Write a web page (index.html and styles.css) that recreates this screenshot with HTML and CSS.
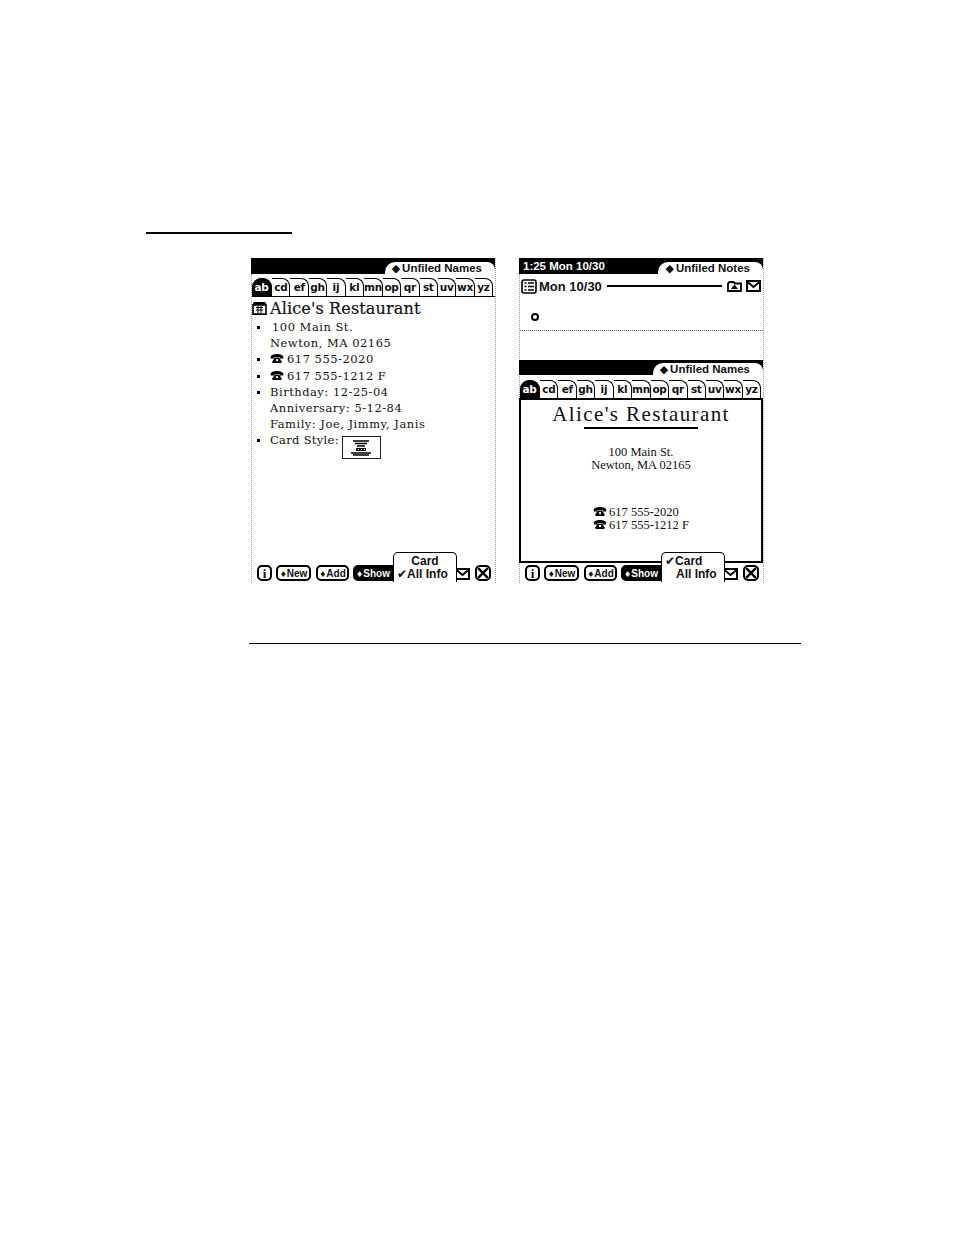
FILE: index.html
```html
<!DOCTYPE html>
<html lang="en">
<head>
    <meta charset="UTF-8">
    <meta name="viewport" content="width=device-width, initial-scale=1.0">
    <title>Names - card and all info views</title>
    <link rel="stylesheet" href="styles.css">
</head>
<body>
    <svg class="defs" width="0" height="0">
        <symbol id="phone" viewBox="0 0 14 10">
            <path d="M0 3.600C0 1 3.500 0 7 0s7 1 7 3.600V5H10V3.400H4V5H0z" fill="#000"/>
            <path d="M4.600 4h4.800l2.600 4v2H2V8z" fill="#000"/>
            <circle cx="7" cy="6.800" r="1.300" fill="#fff"/>
        </symbol>
        <symbol id="envelope" viewBox="0 0 15 12">
            <rect x="1" y="1" width="13" height="10" fill="#fff" stroke="#000" stroke-width="2"/>
            <path d="M1.500 2l6 5 6-5" fill="none" stroke="#000" stroke-width="2"/>
        </symbol>
    </svg>

    <div class="rule rule-short"></div>

    <div class="screens">
        <!-- All Info view -->
        <div class="screen">
            <div class="status">
                <span class="status-time"></span>
                <div class="folder-tab"><span class="diamond">◆</span>Unfiled Names</div>
            </div>
            <div class="tabs">
                <div class="tab active">ab</div>
                <div class="tab">cd</div>
                <div class="tab">ef</div>
                <div class="tab">gh</div>
                <div class="tab">ij</div>
                <div class="tab">kl</div>
                <div class="tab">mn</div>
                <div class="tab">op</div>
                <div class="tab">qr</div>
                <div class="tab">st</div>
                <div class="tab">uv</div>
                <div class="tab">wx</div>
                <div class="tab">yz</div>
            </div>
            <div class="info">
                <div class="info-title">
                    <svg class="building" viewBox="0 0 15 13">
                        <path d="M2 0h11l2 3H0z" fill="#000"/>
                        <path d="M1 3h13v9H1z" fill="#fff" stroke="#000" stroke-width="1.600"/>
                        <path d="M4 5.500h7M4 8h7M6 4v7M9 4v7M0 12.500h15" fill="none" stroke="#000"/>
                    </svg>
                    <span>Alice's Restaurant</span>
                </div>
                <div class="info-row"><i class="bullet"></i><span class="address-first">100 Main St.</span></div>
                <div class="info-row"><i></i><span>Newton, MA 02165</span></div>
                <div class="info-row"><i class="bullet"></i><span><svg class="phone"><use href="#phone"/></svg>617 555-2020</span></div>
                <div class="info-row"><i class="bullet"></i><span><svg class="phone"><use href="#phone"/></svg>617 555-1212 F</span></div>
                <div class="info-row"><i class="bullet"></i><span>Birthday: 12-25-04</span></div>
                <div class="info-row"><i></i><span>Anniversary: 5-12-84</span></div>
                <div class="info-row"><i></i><span>Family: Joe, Jimmy, Janis</span></div>
                <div class="info-row"><i class="bullet"></i><span class="card-style-label">Card Style:</span>
                    <div class="card-style">
                        <svg viewBox="0 0 20 16" width="20" height="16">
                            <path d="M2 1h16M4 3.500h12M6 6h8" stroke="#000" stroke-width="1.300"/>
                            <path d="M5 8h10v3H5z" fill="#000"/>
                            <path d="M7 9.500h1M10 9.500h1M13 9.500h1" stroke="#fff"/>
                            <path d="M0 13h20M2 15h16" stroke="#000" stroke-width="1.500"/>
                        </svg>
                    </div>
                </div>
            </div>
            <div class="toolbar">
                <div class="btn btn-info">i</div>
                <div class="btn btn-new"><span class="dot">♦</span>New</div>
                <div class="btn btn-add"><span class="dot">♦</span>Add</div>
                <div class="btn btn-show"><span class="dot">♦</span>Show</div>
                <svg class="btn-env"><use href="#envelope"/></svg>
                <div class="btn btn-close">
                    <svg viewBox="0 0 10 10" width="12" height="12"><path d="M1 1l8 8M9 1l-8 8" stroke="#000" stroke-width="2"/></svg>
                </div>
                <div class="popup">
                    <div class="popup-item popup-center">Card</div>
                    <div class="popup-item"><span class="check">✔</span>All Info</div>
                </div>
            </div>
        </div>

        <!-- Card view -->
        <div class="screen">
            <div class="status">
                <span class="status-time">1:25 Mon 10/30</span>
                <div class="folder-tab"><span class="diamond">◆</span>Unfiled Notes</div>
            </div>
            <div class="note-head">
                <svg class="note-icon" viewBox="0 0 16 15">
                    <rect x="1" y="1" width="14" height="13" rx="2" fill="#fff" stroke="#000" stroke-width="1.600"/>
                    <path d="M3.500 4h2M7 4h6M3.500 7.500h2M7 7.500h6M3.500 11h2M7 11h6" stroke="#000" stroke-width="1.400"/>
                </svg>
                <span class="note-date">Mon 10/30</span>
                <div class="note-line"></div>
                <svg class="note-folder" viewBox="0 0 15 11">
                    <path d="M1 10V2.500L2.500 1h4L8 2.500h6V10z" fill="#fff" stroke="#000" stroke-width="1.800"/>
                    <path d="M7.500 3.500L11 8H4z" fill="#000"/>
                </svg>
                <svg class="note-env"><use href="#envelope"/></svg>
            </div>
            <div class="note-body"><div class="note-dot"></div></div>
            <div class="note-gap"></div>
            <div class="status status-names">
                <span class="status-time"></span>
                <div class="folder-tab"><span class="diamond">◆</span>Unfiled Names</div>
            </div>
            <div class="tabs tabs-card">
                <div class="tab active">ab</div>
                <div class="tab">cd</div>
                <div class="tab">ef</div>
                <div class="tab">gh</div>
                <div class="tab">ij</div>
                <div class="tab">kl</div>
                <div class="tab">mn</div>
                <div class="tab">op</div>
                <div class="tab">qr</div>
                <div class="tab">st</div>
                <div class="tab">uv</div>
                <div class="tab">wx</div>
                <div class="tab">yz</div>
            </div>
            <div class="card">
                <div class="card-name">Alice's Restaurant</div>
                <div class="card-rule"></div>
                <div class="card-address">
                    <div>100 Main St.</div>
                    <div>Newton, MA 02165</div>
                </div>
                <div class="card-phones">
                    <div><svg class="phone"><use href="#phone"/></svg>617 555-2020</div>
                    <div><svg class="phone"><use href="#phone"/></svg>617 555-1212 F</div>
                </div>
            </div>
            <div class="toolbar">
                <div class="btn btn-info">i</div>
                <div class="btn btn-new"><span class="dot">♦</span>New</div>
                <div class="btn btn-add"><span class="dot">♦</span>Add</div>
                <div class="btn btn-show"><span class="dot">♦</span>Show</div>
                <svg class="btn-env"><use href="#envelope"/></svg>
                <div class="btn btn-close">
                    <svg viewBox="0 0 10 10" width="12" height="12"><path d="M1 1l8 8M9 1l-8 8" stroke="#000" stroke-width="2"/></svg>
                </div>
                <div class="popup">
                    <div class="popup-item"><span class="check">✔</span>Card</div>
                    <div class="popup-item popup-indent">All Info</div>
                </div>
            </div>
        </div>
    </div>

    <div class="rule rule-long"></div>
</body>
</html>
```

FILE: styles.css
```css
html,
body {
    margin: 0;
    height: 1235px;
    overflow: hidden;
    background-color: #fff;
    color: #111;
    font-family: 'Liberation Serif', serif;
}

.defs {
    position: absolute;
}

.rule {
    background-color: #000;
}

.rule-short {
    width: 146px;
    height: 2px;
    margin: 232px 0 0 146px;
}

.rule-long {
    width: 552px;
    height: 1.500px;
    margin: 59.500px 0 0 249px;
}

.screens {
    display: flex;
    gap: 23px;
    margin: 24px 0 0 251px;
}

.screen {
    width: 245px;
    height: 325px;
    display: flex;
    flex-direction: column;
    box-sizing: border-box;
    border-left: 1px dotted #999;
    border-right: 1px dotted #999;
}

/* Black bar with folder tab */
.status {
    height: 16px;
    flex: none;
    margin-left: -1px;
    display: flex;
    justify-content: space-between;
    align-items: flex-end;
    background-color: #000;
    font-family: 'Liberation Sans', sans-serif;
    font-weight: bold;
}

.status-names {
    height: 15px;
}

.status-time {
    color: #fff;
    font-size: 11.500px;
    line-height: 14px;
    padding: 0 0 1px 4px;
}

.folder-tab {
    height: 12px;
    box-sizing: border-box;
    padding: 0 13px 0 7px;
    background-color: #fff;
    color: #111;
    border-radius: 10px 8px 0 0;
    font-size: 11.500px;
    line-height: 13px;
    white-space: nowrap;
}

.diamond {
    font-family: 'DejaVu Sans', sans-serif;
    font-size: 11px;
    margin-right: 2px;
}

/* Alphabet tabs */
.tabs {
    display: flex;
    height: 18px;
    flex: none;
    margin: 4px 2px 0 0;
    font-family: 'DejaVu Sans', sans-serif;
    font-size: 10.500px;
    font-weight: bold;
    letter-spacing: -0.3px;
}

.tabs-card {
    margin-top: 5px;
}

.tab {
    flex: 1 1 0;
    text-align: center;
    box-sizing: border-box;
    border-top: 1.500px solid #000;
    border-right: 1.500px solid #000;
    border-top-right-radius: 8px;
    line-height: 17px;
    color: #111;
}

.tab.active {
    flex-grow: 1.100;
    background-color: #000;
    color: #fff;
    border-radius: 9px 9px 0 0;
}

/* All Info list */
.info {
    flex: 1;
    border-top: 1.500px solid #000;
    font-family: 'DejaVu Serif', serif;
    font-size: 11.500px;
    letter-spacing: 0.5px;
}

.info-title {
    display: flex;
    align-items: center;
    gap: 3px;
    height: 22px;
    padding-top: 1px;
    box-sizing: border-box;
    font-size: 16px;
    letter-spacing: 0.15px;
    font-weight: normal;
    -webkit-text-stroke: 0.2px #111;
}

.building {
    width: 15px;
    height: 13px;
    flex: none;
}

.info-row {
    display: flex;
    height: 16.200px;
    line-height: 16px;
    white-space: nowrap;
}

.info-row i {
    width: 18px;
    flex: none;
    position: relative;
}

.info-row .bullet::before {
    content: "";
    position: absolute;
    left: 5px;
    top: 7px;
    width: 3px;
    height: 3px;
    background-color: #000;
}

.address-first {
    margin-left: 2px;
}

.phone {
    width: 14px;
    height: 9px;
    margin-right: 3px;
}

.card-style-label {
    letter-spacing: 0.3px;
}

.card-style {
    width: 39px;
    height: 23px;
    margin: 4px 0 0 3px;
    flex: none;
    box-sizing: border-box;
    border: 1px solid #222;
    display: flex;
    align-items: center;
    justify-content: center;
}

/* Note area on the right hand screen */
.note-head {
    display: flex;
    align-items: center;
    height: 16px;
    margin: 4px 2px 0 1px;
    flex: none;
    font-family: 'Liberation Sans', sans-serif;
    font-size: 13px;
    font-weight: bold;
}

.note-icon {
    width: 16px;
    height: 15px;
    flex: none;
    margin-right: 2px;
}

.note-date {
    white-space: nowrap;
}

.note-line {
    flex: 1;
    height: 2px;
    margin: 0 5px;
    background-color: #000;
}

.note-folder {
    width: 15px;
    height: 11px;
    flex: none;
    margin-right: 4px;
}

.note-env {
    width: 15px;
    height: 12px;
    flex: none;
}

.note-body {
    height: 17px;
    flex: none;
    margin-top: 4px;
    padding: 15px 0 0 11px;
    border-bottom: 1px dotted #666;
}

.note-dot {
    width: 4px;
    height: 4px;
    border: 2px solid #000;
    border-radius: 50%;
}

.note-gap {
    height: 29px;
    flex: none;
}

/* Card view */
.card {
    flex: 1;
    box-sizing: border-box;
    margin-left: -1px;
    border: 2px solid #000;
    display: flex;
    flex-direction: column;
    align-items: center;
    font-size: 12.500px;
    line-height: 13px;
}

.card-name {
    font-size: 21px;
    line-height: 28px;
    letter-spacing: 1.400px;
}

.card-rule {
    width: 114px;
    height: 2px;
    margin-top: -1px;
    background-color: #000;
}

.card-address {
    margin-top: 17px;
    text-align: center;
}

.card-phones {
    margin-top: 34px;
}

.card-phones .phone {
    margin-right: 2px;
}

/* Bottom buttons */
.toolbar {
    position: relative;
    height: 18px;
    margin-top: 2px;
    flex: none;
    display: flex;
    align-items: flex-start;
    font-family: 'Liberation Sans', sans-serif;
    font-size: 10px;
    font-weight: bold;
}

.btn {
    height: 16px;
    box-sizing: border-box;
    border: 2px solid #000;
    border-radius: 5px;
    line-height: 13px;
    text-align: center;
    white-space: nowrap;
}

.btn-info {
    width: 15px;
    margin-left: 5px;
    font-family: 'Liberation Serif', serif;
    font-size: 13px;
}

.btn-new {
    width: 35px;
    margin-left: 4px;
}

.btn-add {
    width: 33px;
    margin-left: 5px;
}

.btn-show {
    width: 50px;
    margin-left: 4px;
    padding-right: 10px;
    background-color: #000;
    color: #fff;
    border-radius: 5px 0 0 5px;
}

.dot {
    font-family: 'DejaVu Sans', sans-serif;
    font-size: 8px;
}

.btn-env {
    width: 15px;
    height: 12px;
    margin: 3px 0 0 52px;
    flex: none;
}

.btn-close {
    width: 16px;
    height: 16px;
    margin-left: 5px;
    display: flex;
    align-items: center;
    justify-content: center;
}

/* Show menu sits over the toolbar */
.popup {
    position: absolute;
    left: 141px;
    bottom: 1px;
    width: 64px;
    height: 30px;
    box-sizing: border-box;
    padding-top: 2px;
    border: 1.500px solid #000;
    border-bottom: none;
    border-radius: 5px 5px 0 0;
    background-color: #fff;
    font-size: 12px;
    line-height: 13px;
}

.popup-item {
    padding-left: 3px;
    white-space: nowrap;
}

.popup-center {
    text-align: center;
    padding-left: 0;
}

.popup-indent {
    padding-left: 14px;
}

.check {
    font-family: 'DejaVu Sans', sans-serif;
    font-size: 12px;
}
```
